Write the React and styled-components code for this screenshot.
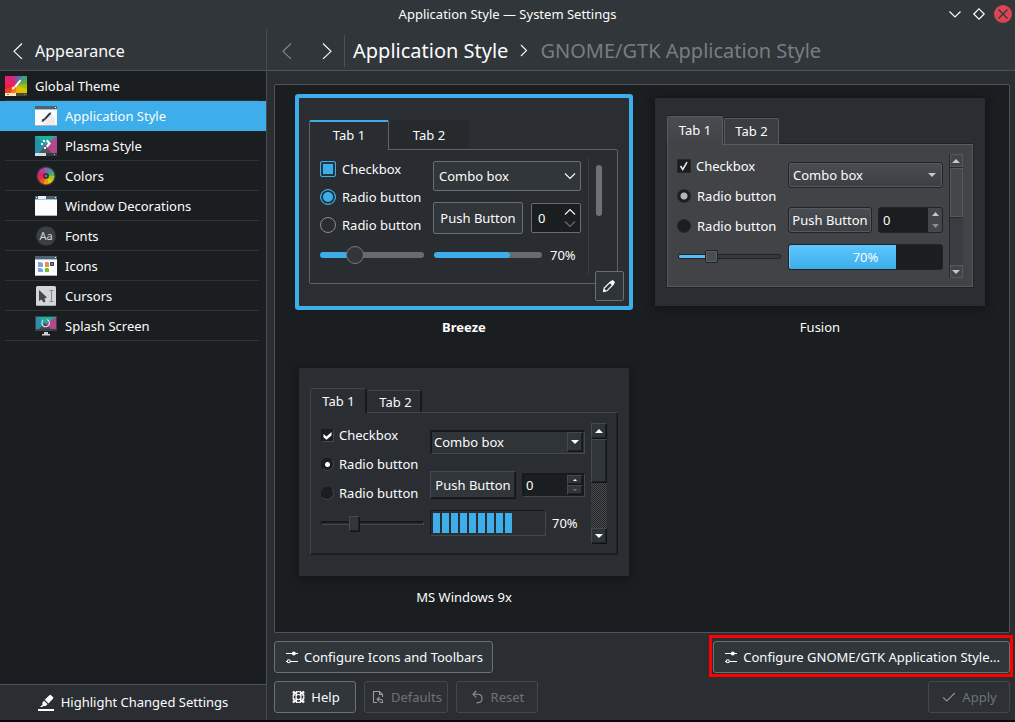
import React from 'react';
import styled, { createGlobalStyle, css } from 'styled-components';

const GlobalStyle = createGlobalStyle`
  *, *::before, *::after { box-sizing: border-box; }
  body {
    margin: 0;
    padding-bottom: 2px;
    background: #05070a;
    color: #fcfcfc;
    font: 13px/20px "Noto Sans", sans-serif;
  }
  button, input, select {
    margin: 0;
    padding: 0;
    border: 0;
    border-radius: 0;
    background: none;
    color: inherit;
    font: inherit;
  }
  a { color: inherit; text-decoration: none; }
  svg { display: block; flex: none; }
`;

/* ---------- Window frame ---------- */

const Window = styled.div`
  display: flex;
  flex-direction: column;
  min-height: calc(100vh - 2px);
  background: #2a2e32;
`;

const TitleBar = styled.header`
  display: grid;
  grid-template-columns: 1fr auto 1fr;
  align-items: center;
  height: 29px;
  padding-bottom: 1px;
  background: #31363b;
`;

const WindowTitle = styled.div`
  grid-column: 2;
`;

const WindowControls = styled.div`
  display: flex;
  justify-content: flex-end;
  gap: 6px;
  padding-right: 3px;
`;

const WindowButton = styled.button`
  width: 18px;
  height: 18px;
  border-radius: 50%;
  background: ${(p) => (p.$danger ? '#da4453' : 'none')};
`;

const Body = styled.div`
  display: flex;
  flex: 1;
`;

/* ---------- Sidebar ---------- */

const Sidebar = styled.nav`
  display: flex;
  flex-direction: column;
  flex: none;
  width: 267px;
  border-right: 1px solid #454d50;
  background: #1b1e20;
`;

const SidebarHeader = styled.button`
  display: flex;
  align-items: center;
  gap: 12px;
  height: 42px;
  padding: 2px 0 0 13px;
  border-bottom: 1px solid #4b5558;
  background: #31363b;
  font-size: 16px;
  line-height: 24px;
`;

const SidebarList = styled.ul`
  flex: 1;
  margin: 0;
  padding: 0;
  list-style: none;
`;

const SidebarLink = styled.a`
  display: flex;
  align-items: center;
  gap: 8px;
  height: 30px;
  padding-left: ${(p) => (p.$nested ? 35 : 5)}px;
  background: ${(p) =>
    p.$active
      ? '#3daee9'
      : 'linear-gradient(#2e3336, #2e3336) 5px 100% / calc(100% - 12px) 1px no-repeat'};
`;

const SidebarFooter = styled.button`
  display: flex;
  align-items: center;
  justify-content: center;
  gap: 6px;
  height: 36px;
  padding-bottom: 1px;
  border-top: 1px solid #4b5558;
  background: #2a2e32;
`;

/* ---------- Main column ---------- */

const Main = styled.main`
  display: flex;
  flex: 1;
  flex-direction: column;
  min-width: 0;
`;

const PageHeader = styled.div`
  display: flex;
  align-items: center;
  height: 42px;
  padding: 2px 0 0 3px;
  border-bottom: 1px solid #4b5558;
  background: #31363b;
`;

const NavButtons = styled.div`
  display: flex;
  gap: 6px;
`;

const NavButton = styled.button`
  display: flex;
  align-items: center;
  justify-content: center;
  width: 34px;
  height: 32px;
  color: ${(p) => (p.disabled ? '#85898c' : '#fcfcfc')};
`;

const HeaderDivider = styled.div`
  width: 1px;
  height: 32px;
  margin-right: 8px;
  background: #4b5155;
`;

const Breadcrumb = styled.h1`
  display: flex;
  align-items: center;
  gap: 12px;
  margin: 0;
  font-size: 20px;
  font-weight: 400;
  line-height: 28px;
`;

const Crumb = styled.span`
  color: ${(p) => (p.$dim ? '#797d80' : '#fcfcfc')};
`;

const Content = styled.div`
  display: flex;
  flex: 1;
  flex-direction: column;
  gap: 8px;
  padding: 13px 5px 7px 7px;
`;

const StylePanel = styled.section`
  display: grid;
  flex: 1;
  grid-template-columns: repeat(auto-fit, 330px);
  gap: 31px 26px;
  align-content: start;
  justify-content: center;
  padding: 13px 0;
  border: 1px solid #4f5557;
  border-radius: 2px;
  background: #1b1e20;
`;

const StyleCard = styled.figure`
  margin: 0;
`;

const StyleName = styled.figcaption`
  margin-top: 11px;
  font-weight: ${(p) => (p.$selected ? 700 : 400)};
  text-align: center;
`;

const ActionRow = styled.div`
  display: flex;
  gap: 8px;
`;

const Spacer = styled.div`
  flex: 1;
`;

const ActionButton = styled.button`
  display: flex;
  align-items: center;
  justify-content: center;
  gap: ${(p) => (p.$wide ? 4 : 5)}px;
  min-width: 82px;
  height: 32px;
  padding: 0 ${(p) => (p.$wide ? 9 : 5)}px;
  border: 1px solid ${(p) => (p.disabled ? '#43484c' : '#6b7073')};
  border-radius: 3px;
  background: ${(p) => (p.disabled ? '#2d3135' : '#31363b')};
  color: ${(p) => (p.disabled ? '#6f7376' : '#fcfcfc')};
`;

const Highlighted = styled.div`
  position: relative;
  &::after {
    content: '';
    position: absolute;
    inset: -6px -3px -4px -4px;
    border: 3px solid #f00;
    pointer-events: none;
  }
`;

/* ---------- Parts shared by the previews ---------- */

const Preview = styled.div`
  position: relative;
  display: flex;
  flex-direction: column;
  height: 208px;
  padding: ${(p) => p.$padding};
  border-radius: 1px;
  background: #2a2e32;
  box-shadow: ${(p) => (p.$selected ? '0 0 0 4px #3daee9' : '0 2px 8px 2px #141618')};
`;

const TabRow = styled.div`
  display: flex;
  align-items: flex-end;
`;

const Column = styled.div`
  display: flex;
  flex-direction: column;
  flex: none;
  gap: ${(p) => p.$gap}px;
  width: ${(p) => p.$width}px;
  padding-top: ${(p) => p.$top}px;
`;

const Choice = styled.label`
  display: flex;
  align-items: center;
  gap: ${(p) => p.$gap}px;
  height: 20px;
  white-space: nowrap;
`;

const Mark = styled.span`
  display: grid;
  place-items: center;
  > * { grid-area: 1 / 1; }
  > svg { pointer-events: none; }
`;

const PlainInput = styled.input`
  appearance: none;
  display: block;
`;

const SelectWrap = styled.div`
  display: grid;
  align-items: center;
  > * { grid-area: 1 / 1; }
  > svg, > span { justify-self: end; pointer-events: none; }
`;

const ArrowInset = styled.span`
  margin-right: ${(p) => p.$right}px;
`;

const ControlRow = styled.div`
  display: flex;
  align-items: center;
  justify-content: space-between;
  margin-top: ${(p) => p.$top || 0}px;
`;

const Spin = styled.div`
  display: flex;
  align-items: center;
`;

const SpinInput = styled.input`
  flex: 1;
  min-width: 0;
  appearance: textfield;
  &::-webkit-inner-spin-button { appearance: none; }
`;

const SpinArrows = styled.div`
  display: flex;
  flex: none;
  flex-direction: column;
`;

const SpinArrow = styled.button`
  display: flex;
  align-items: center;
  justify-content: center;
  color: ${(p) => (p.$dim ? '#6a6d70' : 'inherit')};
`;

const SliderSlot = styled.div`
  height: 20px;
  padding: ${(p) => p.$padding};
`;

const Slider = styled.input.attrs({ type: 'range', min: 0, max: 100 })`
  appearance: none;
  display: block;
  height: 20px;
  width: 100%;
  &::-webkit-slider-thumb { appearance: none; }
`;

/* ---------- Breeze preview ---------- */

const BreezeTab = styled.button`
  width: 80px;
  height: ${(p) => (p.$active ? 30 : 29)}px;
  margin-bottom: ${(p) => (p.$active ? -1 : 0)}px;
  background: #262a2d;
  ${(p) =>
    p.$active &&
    css`
      position: relative;
      padding-bottom: 2px;
      border: 1px solid #5f6366;
      border-top: 2px solid #3daee9;
      border-bottom: 0;
      border-radius: 2px 2px 0 0;
      background: #292c30;
    `}
`;

const BreezePane = styled.div`
  display: flex;
  flex: 1;
  padding-left: 10px;
  border: 1px solid #5f6366;
  border-radius: 0 2px 2px 2px;
  background: #292c30;
`;

const BreezeCheck = styled(PlainInput)`
  width: 16px;
  height: 16px;
  border: 1px solid #3daee9;
  border-radius: 2px;
  background: #20363f;
  &:checked { box-shadow: inset 0 0 0 2px #23353f; background: #3daee9; }
`;

const BreezeRadio = styled(PlainInput)`
  width: 16px;
  height: 16px;
  border: 1px solid #8a8e91;
  border-radius: 50%;
  &:checked {
    border-color: #3daee9;
    background: #3daee9;
    box-shadow: inset 0 0 0 2px #23353f;
  }
`;

const BreezeSlider = styled(Slider)`
  &::-webkit-slider-runnable-track {
    height: 6px;
    border-radius: 3px;
    background: linear-gradient(90deg, #3daee9 34%, #686a6d 34%);
  }
  &::-webkit-slider-thumb {
    width: 18px;
    height: 18px;
    margin-top: -6px;
    border: 1px solid #76797c;
    border-radius: 50%;
    background: #31363b;
  }
`;

const BreezeSelect = styled.select`
  appearance: none;
  width: 100%;
  height: 30px;
  padding-left: 5px;
  border: 1px solid #6b6e71;
  border-radius: 2px;
  background: #31363b;
`;

const BreezePush = styled.button`
  width: 90px;
  height: 32px;
  border: 1px solid #6b6e71;
  border-radius: 2px;
  background: #31363b;
`;

const BreezeSpin = styled(Spin)`
  width: 50px;
  height: 30px;
  padding: 0 4px 0 6px;
  border: 1px solid #6b6e71;
  border-radius: 2px;
  background: #1b1e20;
`;

const BreezeProgressRow = styled.div`
  display: flex;
  align-items: center;
  gap: 8px;
  height: 20px;
  padding-left: 1px;
`;

const BreezeProgress = styled.div`
  width: 108px;
  height: 6px;
  border-radius: 3px;
  background: #686a6d;
  overflow: hidden;
  &::before {
    content: '';
    display: block;
    width: 70%;
    height: 6px;
    border-radius: 3px;
    background: #3daee9;
  }
`;

const BreezeScroll = styled.div`
  margin: 8px 0 8px 7px;
  padding: 7px 0 0 7px;
  border-left: 1px solid #393d40;
  &::before {
    content: '';
    display: block;
    width: 6px;
    height: 51px;
    border-radius: 3px;
    background: #6f7275;
  }
`;

const EditButton = styled.button`
  position: absolute;
  right: 5px;
  bottom: 5px;
  display: flex;
  align-items: center;
  justify-content: center;
  width: 29px;
  height: 30px;
  padding-right: 1px;
  border: 1px solid #6b6e71;
  border-radius: 2px;
  background: #2f3438;
`;

/* ---------- Fusion preview ---------- */

const FusionTab = styled.button`
  position: relative;
  width: ${(p) => (p.$active ? 56 : 55)}px;
  height: ${(p) => (p.$active ? 29 : 26)}px;
  margin: 0 1px ${(p) => (p.$active ? -1 : 0)}px 0;
  padding-bottom: 2px;
  border: 1px solid #585b5e;
  border-bottom: 0;
  border-radius: 2px 2px 0 0;
  background: ${(p) => (p.$active ? 'linear-gradient(#484b4f, #414347)' : '#393c40')};
  box-shadow: 0 -1px 0 #1f2224;
`;

const FusionPane = styled.div`
  display: flex;
  flex: 1;
  padding-left: 9px;
  border: 1px solid #585b5e;
  background: #414347;
  box-shadow: 0 0 0 1px #1f2224;
`;

const FusionMark = styled(PlainInput)`
  width: 14px;
  height: 14px;
  border: 1px solid #26292b;
  border-radius: ${(p) => (p.type === 'radio' ? '50%' : 0)};
  background: #1b1e20;
  &[type='radio']:checked {
    background: radial-gradient(circle, #b4b5b6 3px, #1b1e20 4px);
  }
`;

const FusionSlider = styled(Slider)`
  &::-webkit-slider-runnable-track {
    height: 5px;
    border: 1px solid #212426;
    border-radius: 2px;
    background: linear-gradient(90deg, #54bdf5 32%, #36393c 32%);
  }
  &::-webkit-slider-thumb {
    width: 13px;
    height: 13px;
    margin-top: -5px;
    border: 1px solid #212426;
    border-radius: 2px;
    background: #4a4e52;
    box-shadow: inset 0 0 0 1px #5c6063;
  }
`;

const fusionRaised = css`
  height: 26px;
  border: 1px solid #212426;
  border-radius: 3px;
  background: linear-gradient(#4a4e52, #3b3f43);
  box-shadow: inset 0 0 0 1px #565a5d;
`;

const FusionSelect = styled.select`
  ${fusionRaised}
  appearance: none;
  width: 100%;
  padding-left: 4px;
`;

const FusionPush = styled.button`
  ${fusionRaised}
  width: 84px;
`;

const FusionSpin = styled(Spin)`
  width: 65px;
  height: 26px;
  padding-left: 4px;
  border: 1px solid #212426;
  border-radius: 3px;
  background: #1b1e20;
  overflow: hidden;
`;

const FusionArrow = styled(SpinArrow)`
  width: 14px;
  height: 12px;
  background: #43474b;
`;

const FusionProgress = styled.div`
  display: grid;
  place-items: center;
  height: 26px;
  border: 1px solid #212426;
  border-radius: 3px;
  background: linear-gradient(#5cc6ff, #3daee9) 0 0 / 70% 100% no-repeat #1b1e20;
  box-shadow: inset 1px 0 0 #6fccff;
`;

const FusionScroll = styled.div`
  display: flex;
  flex-direction: column;
  width: 14px;
  height: 124px;
  margin: 9px 0 0 6px;
  border-left: 1px solid #25282a;
  background: #393c40;
`;

const FusionScrollEnd = styled.button`
  display: flex;
  align-items: center;
  justify-content: center;
  height: 13px;
  padding-right: 1px;
  border: 1px solid #56595c;
  background: #414549;
`;

const FusionThumb = styled.div`
  height: 49px;
  margin: 1px 0 auto;
  border: 1px solid #56595c;
  background: #43474a;
  box-shadow: 0 1px 0 #25282a, 0 -1px 0 #25282a;
`;

/* ---------- MS Windows 9x preview ---------- */

const raised = css`
  border: 1px solid;
  border-color: #45494d #121416 #121416 #45494d;
  box-shadow: inset -1px -1px 0 #1e2123;
`;

const sunken = css`
  border: 1px solid;
  border-color: #17191b #44484b #44484b #17191b;
`;

const ClassicTab = styled.button`
  position: relative;
  width: ${(p) => (p.$active ? 57 : 55)}px;
  height: ${(p) => (p.$active ? 25 : 22)}px;
  margin-bottom: ${(p) => (p.$active ? -1 : 0)}px;
  padding-left: ${(p) => (p.$active ? 1 : 4)}px;
  border: 1px solid #414548;
  border-left-width: ${(p) => (p.$active ? 1 : 0)}px;
  border-right: 2px solid #17191b;
  border-bottom: 0;
  border-radius: 2px 2px 0 0;
  background: #2a2e32;
`;

const ClassicPane = styled.div`
  display: flex;
  flex: 1;
  padding-left: 10px;
  border: 1px solid;
  border-color: #414548 #17191b #17191b #414548;
  box-shadow: inset -1px -1px 0 #202326;
`;

const ClassicMark = styled(PlainInput)`
  ${sunken}
  width: 13px;
  height: 13px;
  border-radius: ${(p) => (p.type === 'radio' ? '50%' : 0)};
  background: #1b1e20;
  &[type='radio']:checked {
    background: radial-gradient(circle, #fff 2px, #1b1e20 3px);
  }
`;

const ClassicSlider = styled(Slider)`
  &::-webkit-slider-runnable-track {
    height: 4px;
    ${sunken}
    border-top-width: 2px;
    background: #2a2e32;
  }
  &::-webkit-slider-thumb {
    width: 11px;
    height: 16px;
    margin-top: -7px;
    ${raised}
    background: #31363b;
  }
`;

const ClassicSelect = styled.select`
  ${sunken}
  border-width: 2px 1px 1px 2px;
  appearance: none;
  width: 100%;
  height: 24px;
  padding: 0 0 2px 2px;
  background: #2f3438;
`;

const ClassicSelectArrow = styled.span`
  ${raised}
  display: flex;
  align-items: center;
  justify-content: center;
  width: 16px;
  height: 20px;
  margin-right: 2px;
  background: #31363b;
`;

const ClassicPush = styled.button`
  ${raised}
  width: 86px;
  height: 28px;
  background: #31363b;
`;

const ClassicSpin = styled(Spin)`
  ${sunken}
  border-width: 2px 1px 1px 2px;
  width: 63px;
  height: 24px;
  padding: 0 1px 1px 2px;
  margin-bottom: 1px;
  background: #1b1e20;
`;

const ClassicArrow = styled(SpinArrow)`
  ${raised}
  width: 16px;
  height: 10px;
  background: #31363b;
`;

const ClassicProgressRow = styled.div`
  display: flex;
  align-items: center;
  gap: 6px;
`;

const ClassicProgress = styled.div`
  ${sunken}
  width: 116px;
  height: 26px;
  padding: 2px;
  &::before {
    content: '';
    display: block;
    width: 80px;
    height: 20px;
    background: repeating-linear-gradient(90deg, #3daee9 0 7px, transparent 7px 9px);
  }
`;

const ClassicScroll = styled.div`
  display: flex;
  flex-direction: column;
  width: 16px;
  height: 121px;
  margin: 10px 0 0 6px;
  background: repeating-conic-gradient(#484b4e 0 25%, #25282b 0 50%) 0 0 / 2px 2px;
`;

const ClassicScrollEnd = styled.button`
  ${raised}
  display: flex;
  align-items: center;
  justify-content: center;
  height: 16px;
  padding-right: 1px;
  background: #2f3438;
`;

const ClassicThumb = styled.div`
  ${raised}
  height: 44px;
  margin-bottom: auto;
  background: #31363b;
`;

/* ---------- Icons ---------- */

const Chevron = ({ points, w, h }) => (
  <svg width={w} height={h} viewBox={`0 0 ${w} ${h}`} fill="none" stroke="currentColor" strokeWidth="1.1">
    <polyline points={points} />
  </svg>
);

const ChevronLeft = () => <Chevron w={10} h={16} points="9,0.5 1,8.3 9,16" />;
const ChevronRight = () => <Chevron w={10} h={16} points="1,0.5 9,8.3 1,16" />;

const Triangle = ({ down, w = 7, h = 4, color = '#c4c6c7' }) => (
  <svg width={w} height={h} viewBox="0 0 8 4" preserveAspectRatio="none">
    <path d={down ? 'M0 0H8L4 4Z' : 'M0 4H8L4 0Z'} fill={color} />
  </svg>
);

const Settings = () => (
  <svg width="16" height="16" viewBox="0 0 16 16" fill="none" stroke="currentColor" strokeWidth="1.1">
    <path d="M2 4.5H14M6.3 12.5H14M2 12.5H3.2" />
    <circle cx="9.8" cy="4.5" r="2" fill="currentColor" stroke="none" />
    <circle cx="4.8" cy="12.3" r="1.5" />
  </svg>
);

const HelpIcon = () => (
  <svg width="16" height="16" viewBox="0 0 16 16" fill="none" stroke="currentColor">
    <circle cx="8.5" cy="8" r="5.4" strokeWidth="1.2" />
    <circle cx="8.5" cy="8" r="2.5" strokeWidth="1.2" />
    <path d="M6.5 2V6M10.5 2V6M6.5 10V14M10.5 10V14M2.5 6H6.5M10.5 6H14.5M2.5 10H6.5M10.5 10H14.5" strokeWidth="1.1" />
    <path d="M3 2.5L5.5 5M14 2.5L11.5 5M3 13.5L5.5 11M14 13.5L11.5 11" strokeWidth="2.4" />
  </svg>
);

const DefaultsIcon = () => (
  <svg width="16" height="16" viewBox="0 0 16 16" fill="none" stroke="#9a9da0" strokeWidth="1.1">
    <path d="M7 13.5H3.5V2.5H9.5L12.5 5.5V8M9.5 2.5V5.5H12.5" />
    <path d="M9.5 8L7.2 10.3L9.5 12.6M7.5 10.3H10.5Q12.5 10.5 12.5 12.5V13.5H10" />
  </svg>
);

const ResetIcon = () => (
  <svg width="16" height="16" viewBox="0 0 16 16" fill="none" stroke="#8d9093" strokeWidth="1.1">
    <path d="M6.3 2L3 5.3L6.3 8.6M3.2 5.3H8.5A4.2 4.2 0 0 1 8.5 13.6H6.5" />
  </svg>
);

const ApplyIcon = () => (
  <svg width="16" height="16" viewBox="0 0 16 16" fill="none" stroke="#8d9093" strokeWidth="1.1">
    <path d="M2 8.3L5.8 12L13.8 4" />
  </svg>
);

const PencilIcon = () => (
  <svg width="14" height="14" viewBox="0 0 14 14">
    <path d="M1.6 12.4L2.2 9L8.5 2.8L11.2 5.5L5 11.8Z" fill="none" stroke="#fcfcfc" strokeWidth="1.2" />
    <path d="M7.5 3.8L9.9 1.2Q10.5 .8 11.1 1.3L12.8 3Q13.2 3.5 12.7 4.1L10.2 6.5Z" fill="#fcfcfc" />
    <path d="M1.5 12.5L2.1 9.6L4.4 11.9Z" fill="#fcfcfc" />
  </svg>
);

const HighlightIcon = () => (
  <svg width="17" height="17" viewBox="0 0 17 17" fill="#fcfcfc">
    <path d="M0 15H16V17H0Z" />
    <path d="M6.7 5.8L11.4 1.2Q12.2 .5 13 1.2L15 3.1Q15.8 3.9 15 4.7L10.5 9.4Z" />
    <path d="M5.9 6.7L9.6 10.3L7.2 12.3L5.5 11.8L4.4 13H2L4.6 10.6L4.2 9Z" />
  </svg>
);

const ThemeIcon = () => (
  <svg width="22" height="20" viewBox="0 0 22 20">
    <path d="M0 0H22V20H0Z" fill="#e5246b" />
    <path d="M11 9L0 0H7Z" fill="#ec1a6c" />
    <path d="M11 9L6 0H12Z" fill="#b13d8f" />
    <path d="M11 9L12 0H17Z" fill="#5d6fae" />
    <path d="M11 9L17 0H22V4Z" fill="#40a07c" />
    <path d="M11 9L22 3V9Z" fill="#6aaa3b" />
    <path d="M11 9L22 8V14Z" fill="#a5bb16" />
    <path d="M11 9L22 13V17H16Z" fill="#d2c800" />
    <path d="M11 9L17 17H10Z" fill="#f2b200" />
    <path d="M11 9L10 17H4Z" fill="#f67a08" />
    <path d="M11 9L5 17H0V13Z" fill="#f0401c" />
    <path d="M11 9L0 13V7Z" fill="#f01e44" />
    <path d="M0 17H11V20H0Z" fill="#fce6c6" />
    <path d="M11 17H22V20H11Z" fill="#4a4638" />
    <path d="M2 18H4V19H2ZM19 18H20V19H19Z" fill="#8a7c6c" />
    <path d="M6.7 13.8L7.5 11L9.5 10.4L10 11.8L8.7 13.2Z" fill="#fff" />
    <path d="M9.2 10.2L14 4.4L16.2 3.4L15.7 5.6L10.7 11.4Z" fill="#fff" />
  </svg>
);

const WindowBase = ({ children }) => (
  <svg width="22" height="20" viewBox="0 0 22 20">
    <path d="M0 0H22V20H0Z" fill="#fcfcfc" />
    <path d="M0 0H22V3H0Z" fill="#56606a" />
    <path d="M0 3H22V4H0Z" fill="#8fc8e8" />
    <path d="M20 1H21V2H20Z" fill="#fff" />
    <path d="M0 19H22V20H0Z" fill="#aeb4b8" />
    {children}
  </svg>
);

const AppStyleIcon = () => (
  <WindowBase>
    <path d="M16 8L20 12V19H10L7 16Z" fill="#ececed" />
    <path d="M6.5 16L7.4 13L9.4 12.5L10.2 13.8L8.8 15.3Z" fill="#34383c" />
    <path d="M9 12.4L14 7L16.3 6.2L15.7 8.2L10.5 13.7Z" fill="#34383c" />
  </WindowBase>
);

const DecorationsIcon = () => (
  <WindowBase>
    <path d="M3 0H11V3H3Z" fill="#eef1f2" />
    <path d="M1 1H2V2H1Z" fill="#fff" />
  </WindowBase>
);

const IconsIcon = () => (
  <WindowBase>
    <path d="M3 6H6L7 7H8V11H3ZM3 12H6L7 13H8V16H3Z" fill="#7ba7dc" />
    <path d="M10 6H13L14 7V11H10Z" fill="#f78a4c" />
    <path d="M10 12H13L14 13V16H10Z" fill="#6cc13b" />
    <path d="M15 6H19V10H15Z" fill="#3f4850" />
    <path d="M16 7.5H18V8.5H16Z" fill="#78b9e0" />
  </WindowBase>
);

const PlasmaIcon = () => (
  <svg width="22" height="20" viewBox="0 0 22 20">
    <path d="M0 0H22V20H0Z" fill="#2591a8" />
    <path d="M0 0H22L11 9Z" fill="#1fae9c" />
    <path d="M22 0V17H17L8 11Z" fill="#b4478c" />
    <path d="M4 17L10 10L17 17Z" fill="#54505e" />
    <path d="M0 17H11V20H0Z" fill="#d8dcde" />
    <path d="M11 17H22V20H11Z" fill="#363b40" />
    <path d="M19 18H20V19H19Z" fill="#ccc" />
    <path d="M11 5L12.5 3.5L16 7.5L12.5 11.5L11 10L13 7.5Z" fill="#fff" />
    <path d="M8 4H10V6H8ZM6 7H8V9H6ZM9 11H11V13H9Z" fill="#fff" />
  </svg>
);

const ringColors = ['#8d62ad', '#4e87a8', '#4eae62', '#a9c321', '#e8ca0b', '#f59a0b', '#ef5b19', '#ec2858', '#e01e7b', '#c33a95'];

const ColorsIcon = () => (
  <svg width="22" height="20" viewBox="0 0 22 20">
    <circle cx="11" cy="10" r="9.8" fill="#33373b" />
    {ringColors.map((color, i) => (
      <path key={color} d="M11 10L8.2 2A8.4 8.4 0 0 1 13.8 2Z" fill={color} transform={`rotate(${i * 36} 11 10)`} />
    ))}
    <circle cx="11" cy="10" r="3" fill="#363a3f" />
    <circle cx="11" cy="10" r="1" fill="#85898c" />
  </svg>
);

const FontsIcon = () => (
  <svg width="22" height="20" viewBox="0 0 22 20">
    <circle cx="11" cy="10" r="9.8" fill="#3b3f43" />
    <text x="11" y="14" textAnchor="middle" fontSize="11" fill="#d5d6d7">Aa</text>
  </svg>
);

const CursorsIcon = () => (
  <svg width="22" height="20" viewBox="0 0 22 20">
    <rect x="1" y="0" width="20" height="20" rx="1.5" fill="#d3d6d7" />
    <path d="M2 19H20V20H2Z" fill="#a8acae" />
    <path d="M4 4V15L6.5 13.5L8.5 16.5L10.5 15.5L9.5 12.5L12 11.5Z" fill="#4b4546" />
    <path d="M14.5 4.5H18.5M16.5 5V15M14.5 15.5H18.5" fill="none" stroke="#8b8788" />
  </svg>
);

const SplashIcon = () => (
  <svg width="22" height="20" viewBox="0 0 22 20">
    <path d="M0 0H22V15H0Z" fill="#3c4247" />
    <path d="M1 1H21V13H1Z" fill="#2591ad" />
    <path d="M3 1H21L11 8Z" fill="#1fae9c" />
    <path d="M21 1V13H15L9 9Z" fill="#b4478c" />
    <path d="M4 13L10 7L16 13Z" fill="#4a4553" />
    <path d="M12 3.4A3.8 3.8 0 1 1 8 4.2" fill="none" stroke="#e4e4e6" strokeWidth="1.1" />
    <path d="M9 16H13V18H15V19.5H7V18H9Z" fill="#cfd2d4" />
  </svg>
);

/* ---------- Previews ---------- */

const BreezePreview = () => (
  <Preview $selected $padding="22px 11px 22px 10px">
    <TabRow role="tablist">
      <BreezeTab role="tab" aria-selected="true" $active>Tab 1</BreezeTab>
      <BreezeTab role="tab" aria-selected="false">Tab 2</BreezeTab>
    </TabRow>
    <BreezePane>
      <Column $width={113} $top={9} $gap={8}>
        <Choice $gap={6}><BreezeCheck type="checkbox" defaultChecked />Checkbox</Choice>
        <Choice $gap={6}><BreezeRadio type="radio" name="breeze" defaultChecked />Radio button</Choice>
        <Choice $gap={6}><BreezeRadio type="radio" name="breeze" />Radio button</Choice>
        <SliderSlot $padding="2px 9px 0 0"><BreezeSlider aria-label="Breeze slider" defaultValue={30} /></SliderSlot>
      </Column>
      <Column $width={148} $top={11} $gap={11}>
        <SelectWrap>
          <BreezeSelect aria-label="Breeze combo box"><option>Combo box</option></BreezeSelect>
          <ArrowInset $right={5}><Chevron w={12} h={8} points="1,1.5 6,6.5 11,1.5" /></ArrowInset>
        </SelectWrap>
        <ControlRow>
          <BreezePush>Push Button</BreezePush>
          <BreezeSpin>
            <SpinInput type="number" aria-label="Breeze number" defaultValue={0} />
            <SpinArrows>
              <SpinArrow aria-label="Increase"><Chevron w={12} h={11} points="1,7.5 6,2.5 11,7.5" /></SpinArrow>
              <SpinArrow aria-label="Decrease" $dim><Chevron w={12} h={11} points="1,3.5 6,8.5 11,3.5" /></SpinArrow>
            </SpinArrows>
          </BreezeSpin>
        </ControlRow>
        <BreezeProgressRow>
          <BreezeProgress role="progressbar" aria-label="Breeze progress" aria-valuenow={70} />
          70%
        </BreezeProgressRow>
      </Column>
      <BreezeScroll />
    </BreezePane>
    <EditButton aria-label="Configure Breeze"><PencilIcon /></EditButton>
  </Preview>
);

const FusionPreview = () => (
  <Preview $padding="18px 12px 19px 12px">
    <TabRow role="tablist">
      <FusionTab role="tab" aria-selected="true" $active>Tab 1</FusionTab>
      <FusionTab role="tab" aria-selected="false">Tab 2</FusionTab>
    </TabRow>
    <FusionPane>
      <Column $width={111} $top={11} $gap={10}>
        <Choice $gap={5}>
          <Mark>
            <FusionMark type="checkbox" defaultChecked />
            <svg width="10" height="10" viewBox="0 0 10 10">
              <path d="M1.5 5L3.8 8.5L8 1.2" fill="none" stroke="#e4e5e6" strokeWidth="1.6" />
            </svg>
          </Mark>
          Checkbox
        </Choice>
        <Choice $gap={6}><FusionMark type="radio" name="fusion" defaultChecked />Radio button</Choice>
        <Choice $gap={6}><FusionMark type="radio" name="fusion" />Radio button</Choice>
        <SliderSlot $padding="0 7px 0 1px"><FusionSlider aria-label="Fusion slider" defaultValue={30} /></SliderSlot>
      </Column>
      <Column $width={155} $top={17} $gap={11}>
        <SelectWrap>
          <FusionSelect aria-label="Fusion combo box"><option>Combo box</option></FusionSelect>
          <ArrowInset $right={7}><Triangle down w={8} /></ArrowInset>
        </SelectWrap>
        <ControlRow $top={8}>
          <FusionPush>Push Button</FusionPush>
          <FusionSpin>
            <SpinInput type="number" aria-label="Fusion number" defaultValue={0} />
            <SpinArrows>
              <FusionArrow aria-label="Increase"><Triangle /></FusionArrow>
              <FusionArrow aria-label="Decrease"><Triangle down color="#8a8c8e" /></FusionArrow>
            </SpinArrows>
          </FusionSpin>
        </ControlRow>
        <FusionProgress role="progressbar" aria-label="Fusion progress" aria-valuenow={70}>70%</FusionProgress>
      </Column>
      <FusionScroll>
        <FusionScrollEnd aria-label="Scroll up"><Triangle w={8} /></FusionScrollEnd>
        <FusionThumb />
        <FusionScrollEnd aria-label="Scroll down"><Triangle down w={8} /></FusionScrollEnd>
      </FusionScroll>
    </FusionPane>
  </Preview>
);

const ClassicPreview = () => (
  <Preview $padding="20px 11px 21px 11px">
    <TabRow role="tablist">
      <ClassicTab role="tab" aria-selected="true" $active>Tab 1</ClassicTab>
      <ClassicTab role="tab" aria-selected="false">Tab 2</ClassicTab>
    </TabRow>
    <ClassicPane>
      <Column $width={109} $top={12} $gap={9}>
        <Choice $gap={5}>
          <Mark>
            <ClassicMark type="checkbox" defaultChecked />
            <svg width="9" height="9" viewBox="0 0 9 9">
              <path d="M.5 3L3.5 5.5L8.5 1V4.5L3.5 8.8L.5 6.2Z" fill="#fff" />
            </svg>
          </Mark>
          Checkbox
        </Choice>
        <Choice $gap={5}><ClassicMark type="radio" name="classic" defaultChecked />Radio button</Choice>
        <Choice $gap={5}><ClassicMark type="radio" name="classic" />Radio button</Choice>
        <SliderSlot $padding="1px 6px 0 0"><ClassicSlider aria-label="Classic slider" defaultValue={30} /></SliderSlot>
      </Column>
      <Column $width={155} $top={17} $gap={11}>
        <SelectWrap>
          <ClassicSelect aria-label="Classic combo box"><option>Combo box</option></ClassicSelect>
          <ClassicSelectArrow><Triangle down w={8} color="#fff" /></ClassicSelectArrow>
        </SelectWrap>
        <ControlRow $top={6}>
          <ClassicPush>Push Button</ClassicPush>
          <ClassicSpin>
            <SpinInput type="number" aria-label="Classic number" defaultValue={0} />
            <SpinArrows>
              <ClassicArrow aria-label="Increase"><Triangle w={4} h={2} color="#fff" /></ClassicArrow>
              <ClassicArrow aria-label="Decrease"><Triangle down w={4} h={2} color="#75787b" /></ClassicArrow>
            </SpinArrows>
          </ClassicSpin>
        </ControlRow>
        <ClassicProgressRow>
          <ClassicProgress role="progressbar" aria-label="Classic progress" aria-valuenow={70} />
          70%
        </ClassicProgressRow>
      </Column>
      <ClassicScroll>
        <ClassicScrollEnd aria-label="Scroll up"><Triangle w={8} color="#fff" /></ClassicScrollEnd>
        <ClassicThumb />
        <ClassicScrollEnd aria-label="Scroll down"><Triangle down w={8} color="#fff" /></ClassicScrollEnd>
      </ClassicScroll>
    </ClassicPane>
  </Preview>
);

/* ---------- Page ---------- */

const sections = [
  { label: 'Global Theme', Icon: ThemeIcon },
  { label: 'Application Style', Icon: AppStyleIcon, nested: true, active: true },
  { label: 'Plasma Style', Icon: PlasmaIcon, nested: true },
  { label: 'Colors', Icon: ColorsIcon, nested: true },
  { label: 'Window Decorations', Icon: DecorationsIcon, nested: true },
  { label: 'Fonts', Icon: FontsIcon, nested: true },
  { label: 'Icons', Icon: IconsIcon, nested: true },
  { label: 'Cursors', Icon: CursorsIcon, nested: true },
  { label: 'Splash Screen', Icon: SplashIcon, nested: true },
];

const styles = [
  { name: 'Breeze', View: BreezePreview, selected: true },
  { name: 'Fusion', View: FusionPreview },
  { name: 'MS Windows 9x', View: ClassicPreview },
];

export default function App() {
  return (
    <>
      <GlobalStyle />
      <Window>
        <TitleBar>
          <WindowTitle>Application Style — System Settings</WindowTitle>
          <WindowControls>
            <WindowButton aria-label="Minimize">
              <svg width="18" height="18" viewBox="0 0 18 18"><path d="M3.5 6.5L9 12L14.5 6.5" fill="none" stroke="#fcfcfc" strokeWidth="1.2" /></svg>
            </WindowButton>
            <WindowButton aria-label="Maximize">
              <svg width="18" height="18" viewBox="0 0 18 18"><path d="M9 3.8L14.2 9L9 14.2L3.8 9Z" fill="none" stroke="#fcfcfc" strokeWidth="1.2" /></svg>
            </WindowButton>
            <WindowButton aria-label="Close" $danger>
              <svg width="18" height="18" viewBox="0 0 18 18"><path d="M4.5 4.5L13.5 13.5M13.5 4.5L4.5 13.5" fill="none" stroke="#31363b" strokeWidth="1.2" /></svg>
            </WindowButton>
          </WindowControls>
        </TitleBar>
        <Body>
          <Sidebar>
            <SidebarHeader><ChevronLeft />Appearance</SidebarHeader>
            <SidebarList>
              {sections.map(({ label, Icon, nested, active }) => (
                <li key={label}>
                  <SidebarLink href="#" $nested={nested} $active={active}><Icon />{label}</SidebarLink>
                </li>
              ))}
            </SidebarList>
            <SidebarFooter><HighlightIcon />Highlight Changed Settings</SidebarFooter>
          </Sidebar>
          <Main>
            <PageHeader>
              <NavButtons>
                <NavButton aria-label="Back" disabled><ChevronLeft /></NavButton>
                <NavButton aria-label="Forward"><ChevronRight /></NavButton>
              </NavButtons>
              <HeaderDivider />
              <Breadcrumb>
                <Crumb>Application Style</Crumb>
                <Chevron w={8} h={14} points="1,1 6.5,6.5 1,12" />
                <Crumb $dim>GNOME/GTK Application Style</Crumb>
              </Breadcrumb>
            </PageHeader>
            <Content>
              <StylePanel>
                {styles.map(({ name, View, selected }) => (
                  <StyleCard key={name}>
                    <View />
                    <StyleName $selected={selected}>{name}</StyleName>
                  </StyleCard>
                ))}
              </StylePanel>
              <ActionRow>
                <ActionButton $wide><Settings />Configure Icons and Toolbars</ActionButton>
                <Spacer />
                <Highlighted>
                  <ActionButton $wide><Settings />Configure GNOME/GTK Application Style...</ActionButton>
                </Highlighted>
              </ActionRow>
              <ActionRow>
                <ActionButton><HelpIcon />Help</ActionButton>
                <ActionButton disabled><DefaultsIcon />Defaults</ActionButton>
                <ActionButton disabled><ResetIcon />Reset</ActionButton>
                <Spacer />
                <ActionButton disabled><ApplyIcon />Apply</ActionButton>
              </ActionRow>
            </Content>
          </Main>
        </Body>
      </Window>
    </>
  );
}
